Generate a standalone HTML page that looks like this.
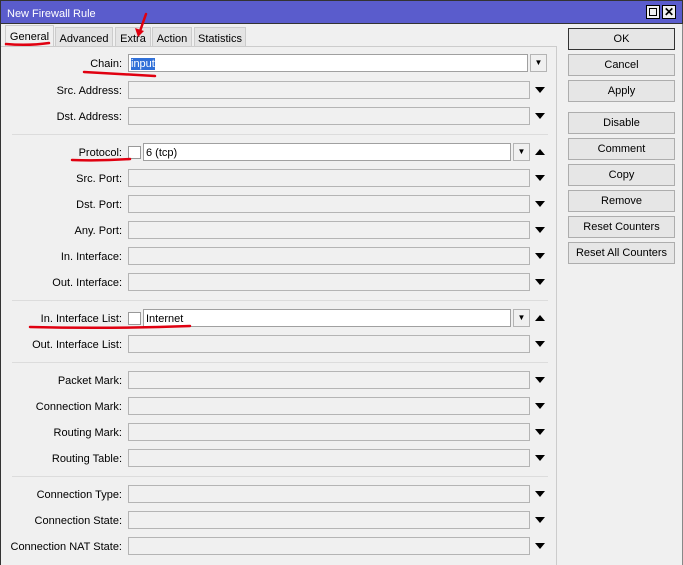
<!DOCTYPE html>
<html><head><meta charset="utf-8"><style>
*{box-sizing:border-box;margin:0;padding:0}
body{width:683px;height:565px;background:#f0f0f0;font-family:"Liberation Sans",sans-serif;font-size:11px;color:#000;position:relative;overflow:hidden}
.a{position:absolute}
.title{left:0;top:0;width:683px;height:24px;background:#5a5ccc;color:#fff;font-size:11px;padding:7px 0 0 6px;border:1px solid #333}
.tb{top:5px;width:14px;height:14px;background:#f0f0f0;border:1px solid #000}
.tab{top:27px;height:20px;background:#e4e4e4;border:1px solid #ccc;border-bottom:none;padding:5px 0 0;text-align:center;font-size:11px}
.tab.s{background:#f0f0f0;top:25px;height:22px}
.lbl{width:122px;text-align:right;left:0;font-size:11px;padding-top:1px}
.f{left:128px;width:402px;height:18px;background:#f0f0f0;border:1px solid #b4b4b4}
.fw{background:#fff;border-color:#a0a0a0}
.dd{width:17px;height:18px;border:1px solid #b4b4b4;background:#f0f0f0;left:513px;text-align:center;font-size:8px;line-height:16px}
.arr{left:535px;width:0;height:0;border-left:5px solid transparent;border-right:5px solid transparent}
.dn{border-top:6px solid #000}
.up{border-bottom:6px solid #000}
.sep{left:12px;width:536px;height:1px;background:#dcdcdc}
.btn{left:568px;width:107px;height:22px;border:1px solid #adadad;background:#e6e6e6;text-align:center;line-height:21px;font-size:11px}
.cb{left:128px;width:13px;height:13px;border:1px solid #999;background:#fff}
</style></head><body>
<div class="a title">New Firewall Rule</div>
<div class="a tb" style="left:646px"><div style="margin:2px;width:8px;height:8px;border:1px solid #000"></div></div>
<div class="a tb" style="left:662px;font-size:12px;line-height:12px;text-align:center;font-weight:bold">✕</div>
<div class="a" style="left:0;top:24px;width:1px;height:541px;background:#333"></div>
<div class="a" style="left:682px;top:24px;width:1px;height:541px;background:#888"></div>
<div class="a tab s" style="left:5px;width:49px">General</div>
<div class="a tab" style="left:55px;width:58px">Advanced</div>
<div class="a tab" style="left:115px;width:36px">Extra</div>
<div class="a tab" style="left:152px;width:40px">Action</div>
<div class="a tab" style="left:194px;width:52px">Statistics</div>
<div class="a" style="left:1px;top:46px;width:556px;height:1px;background:#ccc"></div>
<div class="a" style="left:556px;top:46px;width:1px;height:519px;background:#ccc"></div>

<div class="a lbl" style="top:57px">Chain:</div>
<div class="a f fw" style="top:54px;width:400px;padding:3px 2px 0"><span style="background:#3070d8;color:#fff">input</span></div>
<div class="a dd" style="left:530px;top:54px">▼</div>

<div class="a lbl" style="top:84px">Src. Address:</div><div class="a f" style="top:81px"></div><div class="a arr dn" style="top:87px"></div>
<div class="a lbl" style="top:110px">Dst. Address:</div><div class="a f" style="top:107px"></div><div class="a arr dn" style="top:113px"></div>
<div class="a sep" style="top:134px"></div>

<div class="a lbl" style="top:146px">Protocol:</div>
<div class="a cb" style="top:146px"></div>
<div class="a f fw" style="left:143px;width:368px;top:143px;padding:3px 2px 0">6 (tcp)</div>
<div class="a dd" style="top:143px">▼</div><div class="a arr up" style="top:149px"></div>

<div class="a lbl" style="top:172px">Src. Port:</div><div class="a f" style="top:169px"></div><div class="a arr dn" style="top:175px"></div>
<div class="a lbl" style="top:198px">Dst. Port:</div><div class="a f" style="top:195px"></div><div class="a arr dn" style="top:201px"></div>
<div class="a lbl" style="top:224px">Any. Port:</div><div class="a f" style="top:221px"></div><div class="a arr dn" style="top:227px"></div>
<div class="a lbl" style="top:250px">In. Interface:</div><div class="a f" style="top:247px"></div><div class="a arr dn" style="top:253px"></div>
<div class="a lbl" style="top:276px">Out. Interface:</div><div class="a f" style="top:273px"></div><div class="a arr dn" style="top:279px"></div>
<div class="a sep" style="top:300px"></div>

<div class="a lbl" style="top:312px">In. Interface List:</div>
<div class="a cb" style="top:312px"></div>
<div class="a f fw" style="left:143px;width:368px;top:309px;padding:3px 2px 0">Internet</div>
<div class="a dd" style="top:309px">▼</div><div class="a arr up" style="top:315px"></div>
<div class="a lbl" style="top:338px">Out. Interface List:</div><div class="a f" style="top:335px"></div><div class="a arr dn" style="top:341px"></div>
<div class="a sep" style="top:362px"></div>

<div class="a lbl" style="top:374px">Packet Mark:</div><div class="a f" style="top:371px"></div><div class="a arr dn" style="top:377px"></div>
<div class="a lbl" style="top:400px">Connection Mark:</div><div class="a f" style="top:397px"></div><div class="a arr dn" style="top:403px"></div>
<div class="a lbl" style="top:426px">Routing Mark:</div><div class="a f" style="top:423px"></div><div class="a arr dn" style="top:429px"></div>
<div class="a lbl" style="top:452px">Routing Table:</div><div class="a f" style="top:449px"></div><div class="a arr dn" style="top:455px"></div>
<div class="a sep" style="top:476px"></div>
<div class="a lbl" style="top:488px">Connection Type:</div><div class="a f" style="top:485px"></div><div class="a arr dn" style="top:491px"></div>
<div class="a lbl" style="top:514px">Connection State:</div><div class="a f" style="top:511px"></div><div class="a arr dn" style="top:517px"></div>
<div class="a lbl" style="top:540px">Connection NAT State:</div><div class="a f" style="top:537px"></div><div class="a arr dn" style="top:543px"></div>

<div class="a btn" style="top:28px;border:1px solid #333">OK</div>
<div class="a btn" style="top:54px">Cancel</div>
<div class="a btn" style="top:80px">Apply</div>
<div class="a btn" style="top:112px">Disable</div>
<div class="a btn" style="top:138px">Comment</div>
<div class="a btn" style="top:164px">Copy</div>
<div class="a btn" style="top:190px">Remove</div>
<div class="a btn" style="top:216px">Reset Counters</div>
<div class="a btn" style="top:242px">Reset All Counters</div>

<svg class="a" style="left:0;top:0" width="683" height="565">
<g stroke="#e00010" stroke-width="2.5" fill="none" stroke-linecap="round">
<path d="M6 44 Q28 46 49 43"/>
<path d="M84 72 Q120 74 155 76"/>
<path d="M72 160 Q100 161 130 159"/>
<path d="M30 327 Q110 329 190 326"/>
<path d="M146 14 L139 34"/>
</g>
<path d="M135 28 L138 37 L144 31 Z" fill="#e00010"/>
</svg>
</body></html>
